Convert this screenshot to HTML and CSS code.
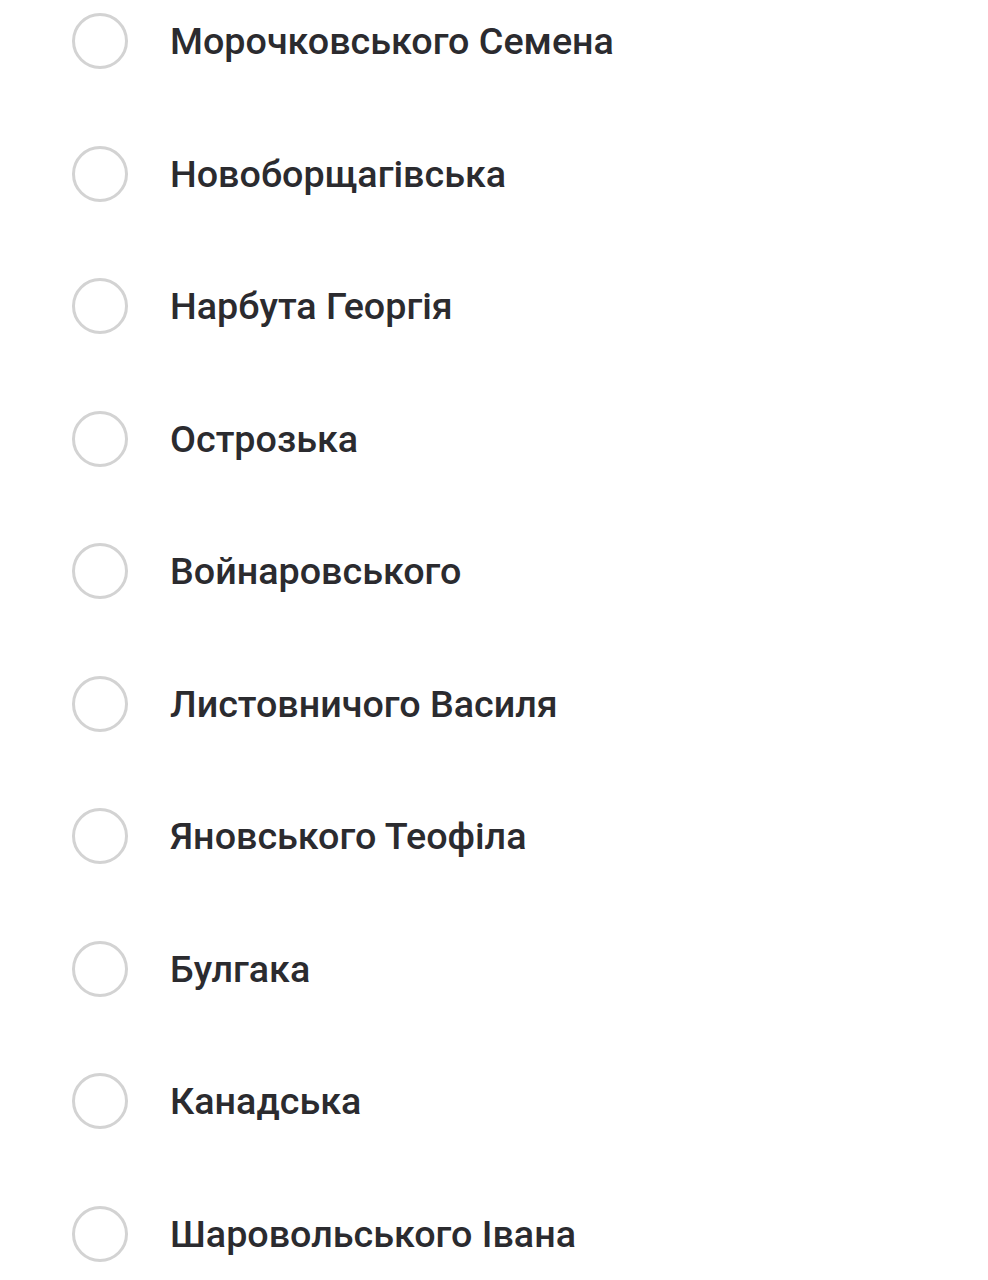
FILE: index.html
```html
<!DOCTYPE html>
<html lang="uk">
<head>
    <meta charset="UTF-8">
    <meta name="viewport" content="width=device-width, initial-scale=1.0">
    <title>Вулиці</title>
    <link rel="stylesheet" href="styles.css">
</head>

<body>
    <div class="street-list">
        <label class="street"><span class="radio"></span>Морочковського Семена</label>
        <label class="street"><span class="radio"></span>Новоборщагівська</label>
        <label class="street"><span class="radio"></span>Нарбута Георгія</label>
        <label class="street"><span class="radio"></span>Острозька</label>
        <label class="street"><span class="radio"></span>Войнаровського</label>
        <label class="street"><span class="radio"></span>Листовничого Василя</label>
        <label class="street"><span class="radio"></span>Яновського Теофіла</label>
        <label class="street"><span class="radio"></span>Булгака</label>
        <label class="street"><span class="radio"></span>Канадська</label>
        <label class="street"><span class="radio"></span>Шаровольського Івана</label>
    </div>
</body>
</html>
```

FILE: styles.css
```css
body {
    margin: 0;
    background: #ffffff;
    font-family: Roboto, "Noto Sans", sans-serif;
    overflow: hidden;
}
.street-list {
    margin-top: -25px;
    padding-left: 72px;
}
.street {
    display: flex;
    align-items: center;
    gap: 42px;
    height: 132.5px;
    font-size: 37.7px;
    font-weight: 500;
    color: #2b2b2f;
}
.radio {
    width: 50px;
    height: 50px;
    border: 3px solid #d3d3d3;
    border-radius: 50%;
    flex-shrink: 0;
}
```
